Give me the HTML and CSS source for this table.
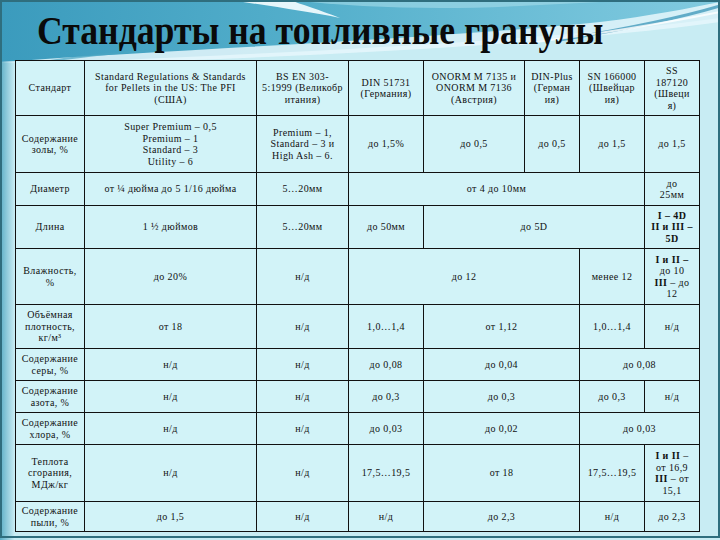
FILE: index.html
```html
<!DOCTYPE html>
<html lang="ru">
<head>
<meta charset="utf-8">
<link rel="stylesheet" href="styles.css">
</head>
<body>
<div class="slide">
  <svg class="bg" width="720" height="540" viewBox="0 0 720 540" aria-hidden="true">
    <defs>
      <linearGradient id="top" x1="0" y1="0" x2="1" y2="0">
        <stop offset="0" stop-color="#3b9bbd"/>
        <stop offset="0.45" stop-color="#55b0cc"/>
        <stop offset="1" stop-color="#82cbe0"/>
      </linearGradient>
      <linearGradient id="side" x1="0" y1="0" x2="1" y2="0">
        <stop offset="0" stop-color="#5aaec6"/>
        <stop offset="1" stop-color="#c4e9f1"/>
      </linearGradient>
    </defs>
    <rect x="0" y="0" width="720" height="540" fill="#c8ecf3"/>
    <rect x="0" y="0" width="14" height="540" fill="url(#side)"/>
    <path d="M0 0 H720 V18 C560 40 300 52 120 60 L0 62 Z" fill="url(#top)"/>
    <path d="M230 0 C270 6 310 12 340 18 C320 10 300 4 290 0 Z" fill="#eefafd" opacity="0.95"/>
    <path d="M290 0 C360 8 440 10 520 6 C560 4 600 2 640 0 Z" fill="#a6dcea" opacity="0.6"/>
    <path d="M0 62 C200 48 420 40 600 22 C650 16 690 8 720 2 V22 C560 44 300 58 60 64 Z" fill="#e6f7fb" opacity="0.85"/>
    <path d="M560 40 C620 30 680 18 720 6" stroke="#2f8fb3" stroke-width="3" fill="none" opacity="0.7"/>
    <path d="M520 44 C600 34 670 22 720 12" stroke="#ffffff" stroke-width="2" fill="none" opacity="0.8"/>
    <path d="M30 64 C80 56 120 52 160 50" stroke="#4aa5c2" stroke-width="2" fill="none" opacity="0.7"/>
  </svg>
  <div class="content">
    <h1 class="title"><span class="title-text">Стандарты на топливные гранулы</span></h1>
    <table class="grid">
      <colgroup>
        <col class="c1"><col class="c2"><col class="c3"><col class="c4"><col class="c5"><col class="c6"><col class="c7"><col class="c8">
      </colgroup>
      <tr class="r1">
        <td>Стандарт</td>
        <td>Standard Regulations &amp; Standards<br>for Pellets in the US: The PFI<br>(США)</td>
        <td>BS EN 303-<br>5:1999 (Великобр<br>итания)</td>
        <td>DIN 51731 (Германия)</td>
        <td>ONORM M 7135 и ONORM M 7136 (Австрия)</td>
        <td>DIN-Plus (Герман<br>ия)</td>
        <td>SN 166000 (Швейцар<br>ия)</td>
        <td>SS<br>187120<br>(Швеци<br>я)</td>
      </tr>
      <tr class="r2">
        <td>Содержание золы, %</td>
        <td>Super Premium – 0,5<br>Premium – 1<br>Standard – 3<br>Utility – 6</td>
        <td>Premium – 1,<br>Standard – 3 и<br>High Ash – 6.</td>
        <td>до 1,5%</td>
        <td>до 0,5</td>
        <td>до 0,5</td>
        <td>до 1,5</td>
        <td>до 1,5</td>
      </tr>
      <tr class="r3">
        <td>Диаметр</td>
        <td>от ¼ дюйма до 5 1/16 дюйма</td>
        <td>5…20мм</td>
        <td colspan="4">от 4 до 10мм</td>
        <td>до<br>25мм</td>
      </tr>
      <tr class="r4">
        <td>Длина</td>
        <td>1 ½ дюймов</td>
        <td>5…20мм</td>
        <td>до 50мм</td>
        <td colspan="3">до 5D</td>
        <td class="b">I – 4D<br>II и III –<br>5D</td>
      </tr>
      <tr class="r5">
        <td>Влажность,<br>%</td>
        <td>до 20%</td>
        <td>н/д</td>
        <td colspan="3">до 12</td>
        <td>менее 12</td>
        <td><b>I и II –</b><br>до 10<br><b>III</b> – до<br>12</td>
      </tr>
      <tr class="r6">
        <td>Объёмная плотность, кг/м³</td>
        <td>от 18</td>
        <td>н/д</td>
        <td>1,0…1,4</td>
        <td colspan="2">от 1,12</td>
        <td>1,0…1,4</td>
        <td>н/д</td>
      </tr>
      <tr class="r7">
        <td>Содержание серы, %</td>
        <td>н/д</td>
        <td>н/д</td>
        <td>до 0,08</td>
        <td colspan="2">до 0,04</td>
        <td colspan="2">до 0,08</td>
      </tr>
      <tr class="r8">
        <td>Содержание азота, %</td>
        <td>н/д</td>
        <td>н/д</td>
        <td>до 0,3</td>
        <td colspan="2">до 0,3</td>
        <td>до 0,3</td>
        <td>н/д</td>
      </tr>
      <tr class="r9">
        <td>Содержание хлора, %</td>
        <td>н/д</td>
        <td>н/д</td>
        <td>до 0,03</td>
        <td colspan="2">до 0,02</td>
        <td colspan="2">до 0,03</td>
      </tr>
      <tr class="r10">
        <td>Теплота сгорания, МДж/кг</td>
        <td>н/д</td>
        <td>н/д</td>
        <td>17,5…19,5</td>
        <td colspan="2">от 18</td>
        <td>17,5…19,5</td>
        <td><b>I и II</b> –<br>от 16,9<br><b>III</b> – от<br>15,1</td>
      </tr>
      <tr class="r11">
        <td>Содержание пыли, %</td>
        <td>до 1,5</td>
        <td>н/д</td>
        <td>н/д</td>
        <td colspan="2">до 2,3</td>
        <td>н/д</td>
        <td>до 2,3</td>
      </tr>
    </table>
  </div>
  <div class="frame"></div>
</div>
</body>
</html>
```
FILE: styles.css
```css
html, body {
  margin: 0;
  padding: 0;
}
body {
  width: 720px;
  height: 540px;
  overflow: hidden;
  background: #c8ecf3;
}
.slide {
  position: relative;
  width: 720px;
  height: 540px;
  overflow: hidden;
}
.bg {
  position: absolute;
  left: 0;
  top: 0;
}
.frame {
  position: absolute;
  left: 0;
  top: 0;
  width: 716px;
  height: 534px;
  border: 2px solid #2f6e7e;
  pointer-events: none;
}
.content {
  position: relative;
  display: flex;
  flex-direction: column;
  padding-left: 15px;
}
.title {
  margin: 0;
  height: 60px;
  padding-left: 22px;
  box-sizing: border-box;
  padding-top: 11px;
  font-family: "Liberation Serif", serif;
  font-weight: bold;
  font-size: 39px;
  line-height: 40px;
  color: #0a0a0a;
  white-space: nowrap;
}
.title-text {
  display: inline-block;
  transform: scaleX(0.915);
  transform-origin: left center;
}
.grid {
  border-collapse: collapse;
  table-layout: fixed;
  width: 685px;
  background: #d2f3f8;
  font-family: "Liberation Serif", serif;
  font-size: 10px;
  line-height: 11.5px;
  letter-spacing: 0.4px;
  color: #111;
}
.grid td {
  border: 1px solid #111;
  text-align: center;
  vertical-align: middle;
  padding: 0 3px;
  overflow: hidden;
}
.c1 { width: 69px; }
.c2 { width: 172px; }
.c3 { width: 92px; }
.c4 { width: 75px; }
.c5 { width: 101px; }
.c6 { width: 55px; }
.c7 { width: 65px; }
.c8 { width: 55px; }
.r1 { height: 55px; }
.r2 { height: 57px; }
.r3 { height: 33px; }
.r4 { height: 43px; }
.r5 { height: 56px; }
.r6 { height: 44px; }
.r7 { height: 32px; }
.r8 { height: 32px; }
.r9 { height: 32px; }
.r10 { height: 57px; }
.r11 { height: 30px; }
.b { font-weight: bold; }
```
